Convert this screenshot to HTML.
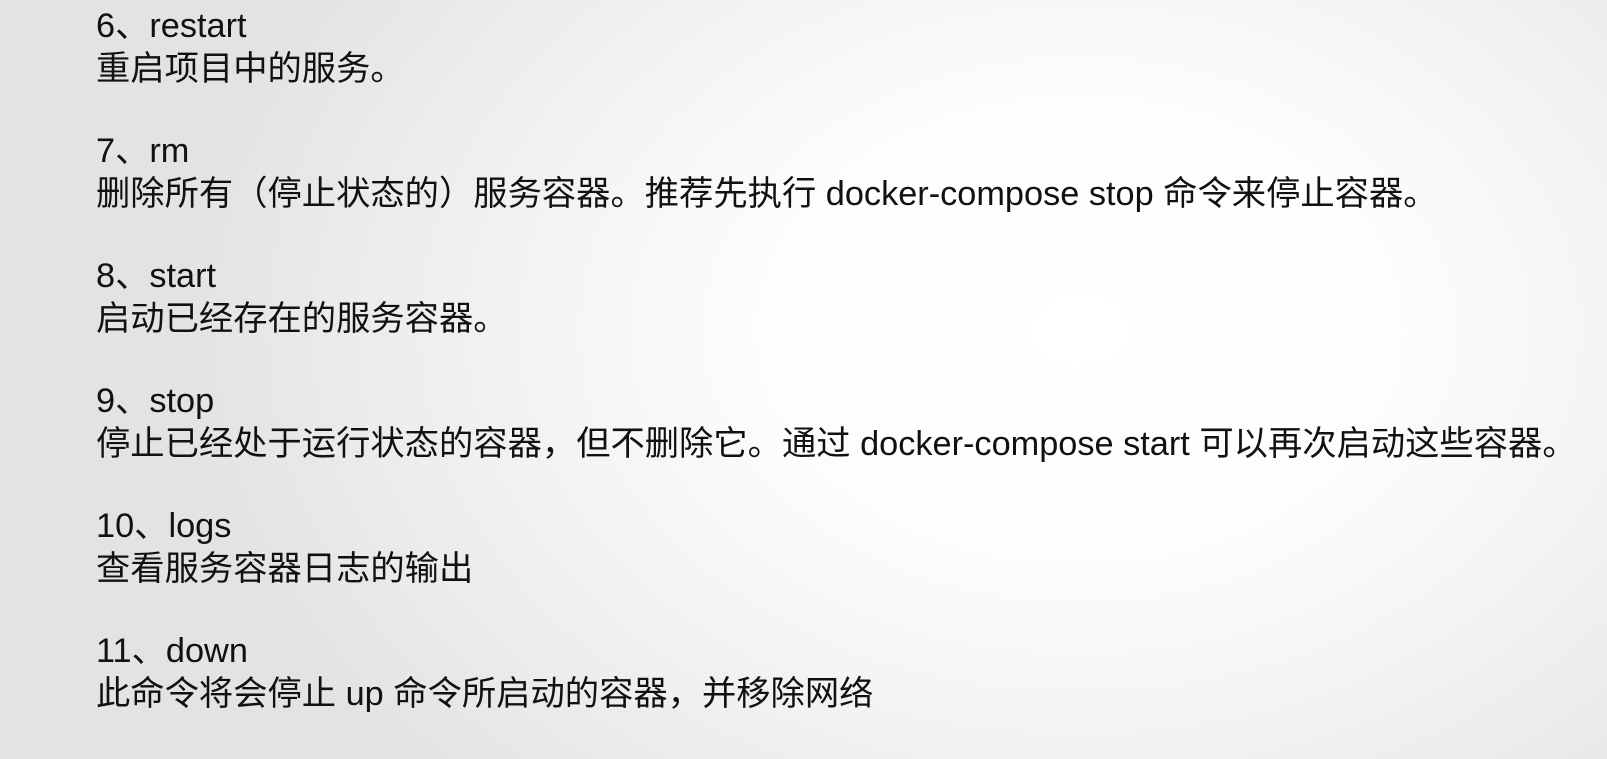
<!DOCTYPE html>
<html><head><meta charset="utf-8"><style>
html,body{margin:0;padding:0}
body{width:1607px;height:759px;overflow:hidden;position:relative;
background:radial-gradient(ellipse 900px 650px at 1080px 330px,#ffffff 0%,#fdfdfd 35%,#f0f0f0 70%,#e3e3e3 100%);
font-family:"Liberation Sans","Noto Sans CJK SC",sans-serif;color:#111;}
.l{position:absolute;left:96px;font-size:34.3px;line-height:44px;white-space:nowrap}
</style></head><body>
<div class="l" style="top:4px">6、restart</div>
<div class="l" style="top:47px">重启项目中的服务。</div>
<div class="l" style="top:129px">7、rm</div>
<div class="l" style="top:172px">删除所有（停止状态的）服务容器。推荐先执行 docker-compose stop 命令来停止容器。</div>
<div class="l" style="top:254px">8、start</div>
<div class="l" style="top:297px">启动已经存在的服务容器。</div>
<div class="l" style="top:379px">9、stop</div>
<div class="l" style="top:422px">停止已经处于运行状态的容器，但不删除它。通过 docker-compose start 可以再次启动这些容器。</div>
<div class="l" style="top:504px">10、logs</div>
<div class="l" style="top:547px">查看服务容器日志的输出</div>
<div class="l" style="top:629px">11、down</div>
<div class="l" style="top:672px">此命令将会停止 up 命令所启动的容器，并移除网络</div>
</body></html>
